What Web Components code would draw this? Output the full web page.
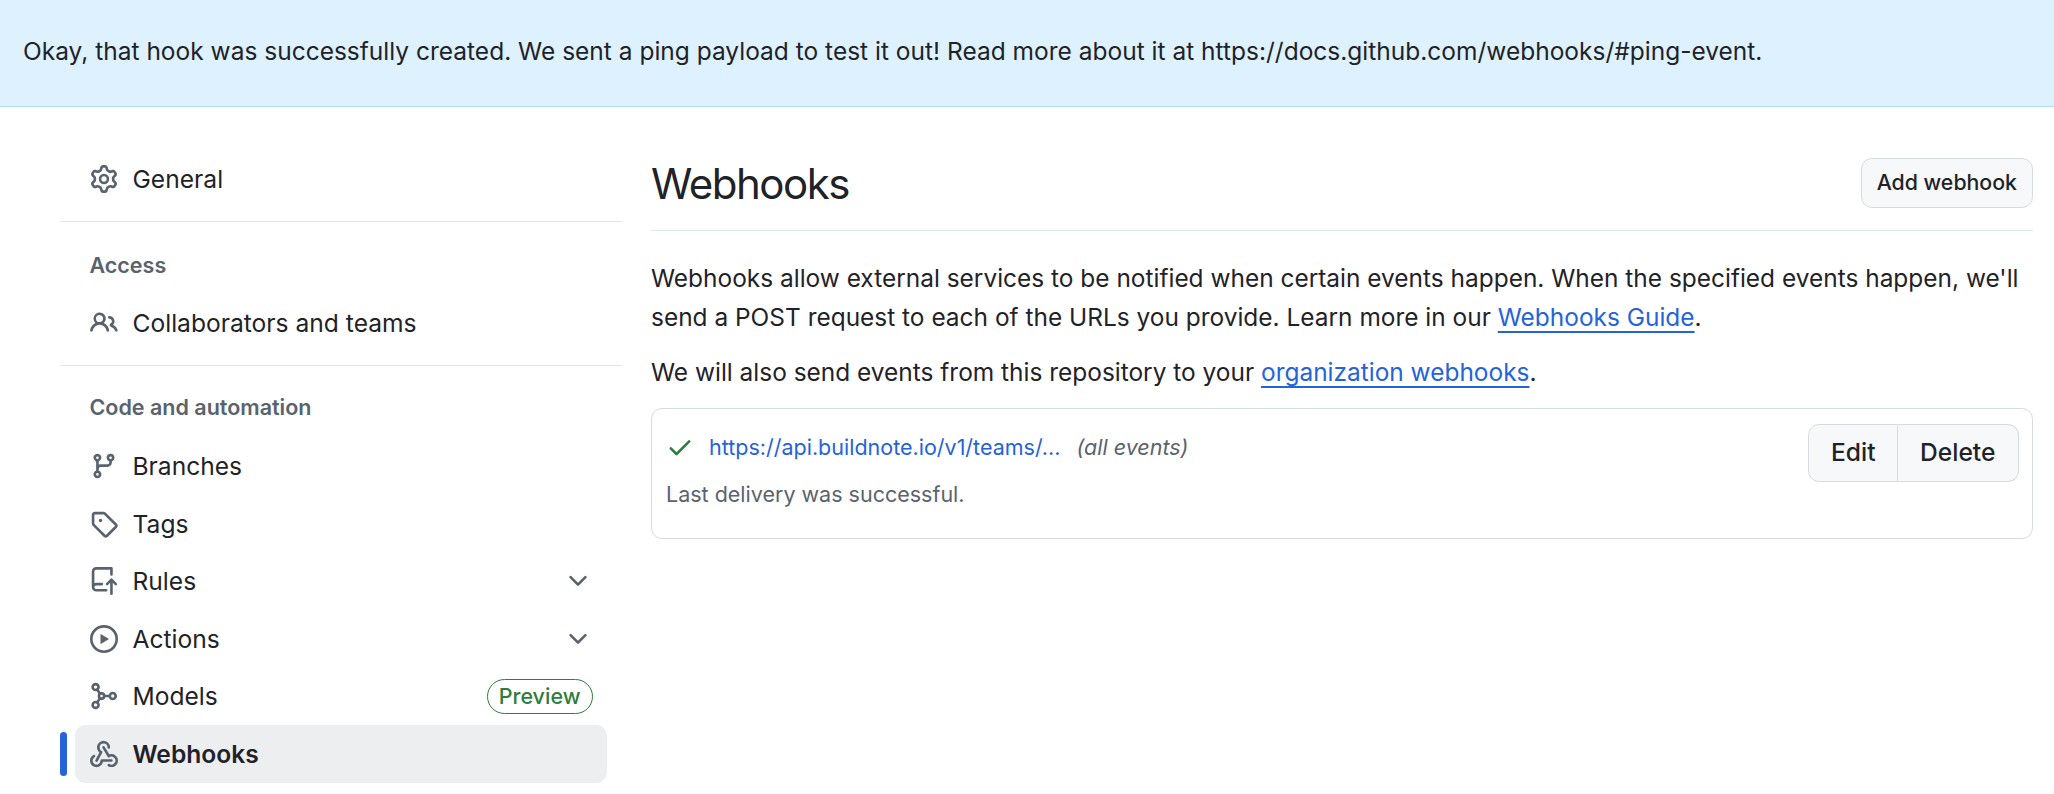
<!DOCTYPE html>
<html lang="en">
<head>
<meta charset="utf-8">
<title>Webhooks</title>
<style>
    html, body {
        margin: 0;
        padding: 0;
        background: #fff;
        color: #1f2328;
        font-family: Inter, "Liberation Sans", sans-serif;
    }
</style>
</head>
<body>
<flash-banner>Okay, that hook was successfully created. We sent a ping payload to test it out! Read more about it at https://docs.github.com/webhooks/#ping-event.</flash-banner>
<settings-layout>
    <settings-nav slot="nav">
        <nav-item icon="gear">General</nav-item>
        <nav-rule></nav-rule>
        <nav-heading>Access</nav-heading>
        <nav-item icon="people">Collaborators and teams</nav-item>
        <nav-rule></nav-rule>
        <nav-heading style="margin-top: 22px; margin-bottom: 11.5px">Code and automation</nav-heading>
        <nav-item icon="branch">Branches</nav-item>
        <nav-item icon="tag">Tags</nav-item>
        <nav-item icon="push" chevron>Rules</nav-item>
        <nav-item icon="play" chevron>Actions</nav-item>
        <nav-item icon="model" badge="Preview">Models</nav-item>
        <nav-item icon="webhook" active>Webhooks</nav-item>
    </settings-nav>
    <page-header>Webhooks<action-button slot="action">Add webhook</action-button></page-header>
    <intro-text>Webhooks allow external services to be notified when certain events happen. When the specified events happen, we'll<br>send a POST request to each of the URLs you provide. Learn more in our <text-link>Webhooks Guide</text-link>.</intro-text>
    <intro-text>We will also send events from this repository to your <text-link>organization webhooks</text-link>.</intro-text>
    <hook-box url="https://api.buildnote.io/v1/teams/..." events="(all events)" status="Last delivery was successful."></hook-box>
</settings-layout>

<script>
const ICONS = {
    gear: '<path d="M8 0a8.2 8.2 0 0 1 .701.031C9.444.095 9.99.645 10.16 1.29l.288 1.107c.018.066.079.158.212.224.231.114.454.243.668.386.123.082.233.09.299.071l1.103-.303c.644-.176 1.392.021 1.82.63.27.385.506.792.704 1.218.315.675.111 1.422-.364 1.891l-.814.806c-.049.048-.098.147-.088.294.016.257.016.515 0 .772-.01.147.038.246.088.294l.814.806c.475.469.679 1.216.364 1.891a7.977 7.977 0 0 1-.704 1.217c-.428.61-1.176.807-1.82.63l-1.102-.302c-.067-.019-.177-.011-.3.071a5.909 5.909 0 0 1-.668.386c-.133.066-.194.158-.211.224l-.29 1.106c-.168.646-.715 1.196-1.458 1.26a8.006 8.006 0 0 1-1.402 0c-.743-.064-1.289-.614-1.458-1.26l-.289-1.106c-.018-.066-.079-.158-.212-.224a5.738 5.738 0 0 1-.668-.386c-.123-.082-.233-.09-.299-.071l-1.103.303c-.644.176-1.392-.021-1.82-.63a8.12 8.12 0 0 1-.704-1.218c-.315-.675-.111-1.422.363-1.891l.815-.806c.05-.048.098-.147.088-.294a6.214 6.214 0 0 1 0-.772c.01-.147-.038-.246-.088-.294l-.815-.806C.635 6.045.431 5.298.746 4.623a7.92 7.92 0 0 1 .704-1.217c.428-.61 1.176-.807 1.82-.63l1.102.302c.067.019.177.011.3-.071.214-.143.437-.272.668-.386.133-.066.194-.158.211-.224l.29-1.106C6.009.645 6.556.095 7.299.03 7.53.01 7.764 0 8 0Zm-.571 1.525c-.036.003-.108.036-.137.146l-.289 1.105c-.147.561-.549.967-.998 1.189-.173.086-.34.183-.5.29-.417.278-.97.423-1.529.27l-1.103-.303c-.109-.03-.175.016-.195.045-.22.312-.412.644-.573.99-.014.031-.021.11.059.19l.815.806c.411.406.562.957.53 1.456a4.709 4.709 0 0 0 0 .582c.032.499-.119 1.05-.53 1.456l-.815.806c-.081.08-.073.159-.059.19.162.346.353.677.573.989.02.03.085.076.195.046l1.102-.303c.56-.153 1.113-.008 1.53.27.161.107.328.204.501.29.447.222.85.629.997 1.189l.289 1.105c.029.109.101.143.137.146a6.6 6.6 0 0 0 1.142 0c.036-.003.108-.036.137-.146l.289-1.105c.147-.561.549-.967.998-1.189.173-.086.34-.183.5-.29.417-.278.97-.423 1.529-.27l1.103.303c.109.029.175-.016.195-.045.22-.313.411-.644.573-.99.014-.031.021-.11-.059-.19l-.815-.806c-.411-.406-.562-.957-.53-1.456a4.709 4.709 0 0 0 0-.582c-.032-.499.119-1.05.53-1.456l.815-.806c.081-.08.073-.159.059-.19a6.464 6.464 0 0 0-.573-.989c-.02-.03-.085-.076-.195-.046l-1.102.303c-.56.153-1.113.008-1.53-.27a4.44 4.44 0 0 0-.501-.29c-.447-.222-.85-.629-.997-1.189l-.289-1.105c-.029-.11-.101-.143-.137-.146a6.6 6.6 0 0 0-1.142 0ZM11 8a3 3 0 1 1-6 0 3 3 0 0 1 6 0ZM9.5 8a1.5 1.5 0 1 0-3.001.001A1.5 1.5 0 0 0 9.5 8Z"/>',
    people: '<path d="M2 5.5a3.5 3.5 0 1 1 5.898 2.549 5.508 5.508 0 0 1 3.034 4.084.75.75 0 1 1-1.482.235 4 4 0 0 0-7.9 0 .75.75 0 0 1-1.482-.236A5.507 5.507 0 0 1 3.102 8.05 3.493 3.493 0 0 1 2 5.5ZM11 4a3.001 3.001 0 0 1 2.22 5.018 5.01 5.01 0 0 1 2.56 3.012.749.749 0 0 1-.885.954.752.752 0 0 1-.549-.514 3.507 3.507 0 0 0-2.522-2.372.75.75 0 0 1-.574-.73v-.352a.75.75 0 0 1 .416-.672A1.5 1.5 0 0 0 11 5.5.75.75 0 0 1 11 4Zm-5.5-.5a2 2 0 1 0-.001 3.999A2 2 0 0 0 5.5 3.5Z"/>',
    branch: '<path d="M9.5 3.25a2.25 2.25 0 1 1 3 2.122V6A2.5 2.5 0 0 1 10 8.5H6a1 1 0 0 0-1 1v1.128a2.251 2.251 0 1 1-1.5 0V5.372a2.25 2.25 0 1 1 1.5 0v1.836A2.493 2.493 0 0 1 6 7h4a1 1 0 0 0 1-1v-.628A2.25 2.25 0 0 1 9.5 3.25Zm-6 0a.75.75 0 1 0 1.5 0 .75.75 0 0 0-1.5 0Zm8.25-.75a.75.75 0 1 0 0 1.5.75.75 0 0 0 0-1.5ZM4.25 12a.75.75 0 1 0 0 1.5.75.75 0 0 0 0-1.5Z"/>',
    tag: '<path d="M1 7.775V2.75C1 1.784 1.784 1 2.75 1h5.025c.464 0 .91.184 1.238.513l6.25 6.25a1.75 1.75 0 0 1 0 2.474l-5.026 5.026a1.75 1.75 0 0 1-2.474 0l-6.25-6.25A1.752 1.752 0 0 1 1 7.775Zm1.5 0c0 .066.026.13.073.177l6.25 6.25a.25.25 0 0 0 .354 0l5.025-5.025a.25.25 0 0 0 0-.354l-6.25-6.25a.25.25 0 0 0-.177-.073H2.75a.25.25 0 0 0-.25.25ZM6 5a1 1 0 1 1 0 2 1 1 0 0 1 0-2Z"/>',
    push: '<path d="M1 2.5A2.5 2.5 0 0 1 3.5 0h8.75a.75.75 0 0 1 .75.75v3.5a.75.75 0 0 1-1.5 0V1.5h-8a1 1 0 0 0-1 1v6.708A2.493 2.493 0 0 1 3.5 9h3.25a.75.75 0 0 1 0 1.5H3.5a1 1 0 0 0 0 2h5.75a.75.75 0 0 1 0 1.5H3.5A2.5 2.5 0 0 1 1 11.5Zm13.23 7.79h-.001l-1.224-1.224v6.184a.75.75 0 0 1-1.5 0V9.066L10.28 10.29a.75.75 0 0 1-1.06-1.061l2.505-2.504a.75.75 0 0 1 1.06 0L15.29 9.23a.751.751 0 0 1-.018 1.042.751.751 0 0 1-1.042.018Z"/>',
    play: '<path d="M8 0a8 8 0 1 1 0 16A8 8 0 0 1 8 0ZM1.5 8a6.5 6.5 0 1 0 13 0 6.5 6.5 0 0 0-13 0Zm4.879-2.773 4.264 2.559a.25.25 0 0 1 0 .428l-4.264 2.559A.25.25 0 0 1 6 10.559V5.442a.25.25 0 0 1 .379-.215Z"/>',
    model: '<g fill="none" stroke="currentColor" stroke-width="1.5" stroke-linecap="round"><circle cx="3.2" cy="2.9" r="1.7"/><circle cx="3.2" cy="13.1" r="1.7"/><circle cx="13" cy="8" r="1.7"/><circle cx="6.6" cy="8" r="1.5"/><path d="M4.1 4.4 5.8 6.7M4.1 11.6 5.8 9.3M8.1 8h3.2"/></g>',
    webhook: '<path d="M5.5 4.25a2.25 2.25 0 0 1 4.5 0 .75.75 0 0 0 1.5 0 3.75 3.75 0 1 0-6.14 2.889l-2.272 4.258a.75.75 0 0 0 1.324.706L7 7.25a.75.75 0 0 0-.309-1.015A2.25 2.25 0 0 1 5.5 4.25Z"/><path d="M7.364 3.607a.75.75 0 0 1 1.03.257l2.608 4.349a3.75 3.75 0 1 1-.628 6.785.75.75 0 0 1 .752-1.299 2.25 2.25 0 1 0-.033-3.88.75.75 0 0 1-1.03-.256L7.107 4.636a.75.75 0 0 1 .257-1.03Z"/><path d="M2.9 8.776A.75.75 0 0 1 2.625 9.8 2.25 2.25 0 1 0 6 11.75a.75.75 0 0 1 .75-.751h5.5a.75.75 0 0 1 0 1.5H7.425a3.751 3.751 0 1 1-5.55-3.998.75.75 0 0 1 1.024.274Z"/>',
    chevron: '<path d="M12.78 5.22a.749.749 0 0 1 0 1.06l-4.25 4.25a.749.749 0 0 1-1.06 0L3.22 6.28a.749.749 0 1 1 1.06-1.06L8 8.939l3.72-3.719a.749.749 0 0 1 1.06 0Z"/>',
    check: '<path d="M13.78 4.22a.75.75 0 0 1 0 1.06l-7.25 7.25a.75.75 0 0 1-1.06 0L2.22 9.28a.751.751 0 0 1 .018-1.042.751.751 0 0 1 1.042-.018L6 10.94l6.72-6.72a.75.75 0 0 1 1.06 0Z"/>'
}

function icon(name, size) {
    return `<svg width="${size}" height="${size}" viewBox="0 0 16 16" fill="currentColor" aria-hidden="true">${ICONS[name]}</svg>`
}

// small helper so the plain elements stay one-liners
function define(tag, html) {
    customElements.define(tag, class extends HTMLElement {
        constructor() {
            super()
            this.attachShadow({ mode: "open" }).innerHTML = html
        }
    })
}

define('flash-banner', `
<style>
    :host {
        display: flex;
        align-items: center;
        box-sizing: border-box;
        height: 107px;
        padding-left: 23px;
        padding-bottom: 4px;
        font-size: 24.5px;
        color: #1f2328;
        background-color: #def1ff;
        border-bottom: 1px solid #b5dcff;
    }
</style>
<slot></slot>`)

define('settings-layout', `
<style>
    :host {
        display: grid;
        grid-template-columns: 562px 1fr;
        column-gap: 29px;
        padding: 43px 21px 0 60px;
    }
    .nav { grid-row: 1; }
    .main { min-width: 0; }
</style>
<div class="nav"><slot name="nav"></slot></div>
<div class="main"><slot></slot></div>`)

define('settings-nav', `
<style>
    :host { display: block; }
</style>
<slot></slot>`)

define('nav-rule', `
<style>
    :host {
        display: block;
        height: 1.5px;
        margin: 13px 0 0;
        background-color: #e3e6ea;
    }
</style>`)

define('nav-heading', `
<style>
    :host {
        display: block;
        height: 38px;
        line-height: 38px;
        margin: 24px 0 10px;
        padding-left: 29.5px;
        font-size: 21.5px;
        font-weight: 600;
        color: #59636e;
    }
</style>
<slot></slot>`)

class NavItem extends HTMLElement {
    constructor() {
        super()
        this.attachShadow({ mode: "open" })
    }

    connectedCallback() {
        const badge = this.getAttribute('badge')
        this.shadowRoot.innerHTML = `
<style>
    :host {
        display: block;
        position: relative;
        height: 57.5px;
        font-size: 24.6px;
        color: #1f2328;
    }
    .row {
        display: flex;
        align-items: center;
        box-sizing: border-box;
        height: 100%;
        margin: 0 15px;
        padding-left: 14.5px;
        border-radius: 11px;
    }
    .icon { display: flex; color: #59636e; margin-right: 15px; }
    .label { flex: 1; }
    .chevron { display: flex; color: #59636e; margin-right: 15px; }
    .badge {
        box-sizing: border-box;
        height: 35px;
        line-height: 32px;
        padding: 0 11px;
        margin-right: 14.5px;
        font-size: 21.5px;
        font-weight: 500;
        color: #2f7d3b;
        border: 1.5px solid #2f7d3b;
        border-radius: 18px;
    }
    :host([active]) .row { background-color: #eceef0; }
    :host([active]) .label { font-weight: 600; }
    /* blue marker left of the selected row */
    :host([active])::before {
        content: "";
        position: absolute;
        left: 0;
        top: 7px;
        width: 7px;
        height: 44px;
        border-radius: 4px;
        background-color: #2563d9;
    }
</style>
<div class="row">
    <span class="icon">${icon(this.getAttribute('icon'), 28)}</span>
    <span class="label"><slot></slot></span>
    ${this.hasAttribute('chevron') ? `<span class="chevron">${icon('chevron', 28)}</span>` : ''}
    ${badge ? `<span class="badge">${badge}</span>` : ''}
</div>`
    }
}
customElements.define('nav-item', NavItem)

define('page-header', `
<style>
    :host {
        display: flex;
        align-items: center;
        justify-content: space-between;
        height: 66px;
        padding-bottom: 14px;
        margin-bottom: 28px;
        font-size: 42px;
        letter-spacing: -1.5px;
        font-weight: 400;
        border-bottom: 1.5px solid #e3e6ea;
    }
</style>
<slot></slot>
<slot name="action"></slot>`)

define('action-button', `
<style>
    :host {
        display: block;
        box-sizing: border-box;
        height: 50px;
        line-height: 47px;
        padding: 0 15px;
        font-size: 21.3px;
        letter-spacing: 0;
        font-weight: 500;
        color: #1f2328;
        background-color: #f6f8fa;
        border: 1.5px solid #d8dce1;
        border-radius: 11px;
    }
</style>
<slot></slot>`)

define('intro-text', `
<style>
    :host {
        display: block;
        font-size: 24.44px;
        line-height: 39px;
        margin-bottom: 16px;
    }
</style>
<slot></slot>`)

define('text-link', `
<style>
    :host {
        color: #2563d9;
        text-decoration: underline;
        text-decoration-thickness: 2px;
        text-underline-offset: 5px;
    }
</style>
<slot></slot>`)

class HookBox extends HTMLElement {
    constructor() {
        super()
        this.attachShadow({ mode: "open" })
    }

    connectedCallback() {
        this.shadowRoot.innerHTML = `
<style>
    :host {
        display: flex;
        justify-content: space-between;
        box-sizing: border-box;
        height: 131px;
        padding: 15px 13px 0 14px;
        border: 1.5px solid #d8dce1;
        border-radius: 11px;
    }
    .url-line {
        display: flex;
        align-items: center;
        height: 44px;
        margin-top: .5px;
        font-size: 21.5px;
    }
    .check { display: flex; color: #2f7d3b; margin: 0 15px 0 0; }
    a { color: #2563d9; text-decoration: none; }
    em { color: #59636e; margin-left: 16px; }
    .status { margin-top: 9.3px; line-height: 32px; font-size: 21.5px; color: #59636e; }
    .group { display: flex; height: 58px; }
    .group span {
        box-sizing: border-box;
        line-height: 55px;
        font-size: 24.6px;
        font-weight: 500;
        color: #1f2328;
        background-color: #f6f8fa;
        border: 1.5px solid #d8dce1;
    }
    .group span:first-child { width: 90px; padding-left: 22px; border-radius: 11px 0 0 11px; }
    .group span:last-child { width: 121px; padding-left: 22px; border-left: 0; border-radius: 0 11px 11px 0; }
</style>
<div>
    <div class="url-line">
        <span class="check">${icon('check', 28)}</span>
        <a>${this.getAttribute('url')}</a>
        <em>${this.getAttribute('events')}</em>
    </div>
    <div class="status">${this.getAttribute('status')}</div>
</div>
<div class="group"><span>Edit</span><span>Delete</span></div>`
    }
}
customElements.define('hook-box', HookBox)
</script>
</body>
</html>
